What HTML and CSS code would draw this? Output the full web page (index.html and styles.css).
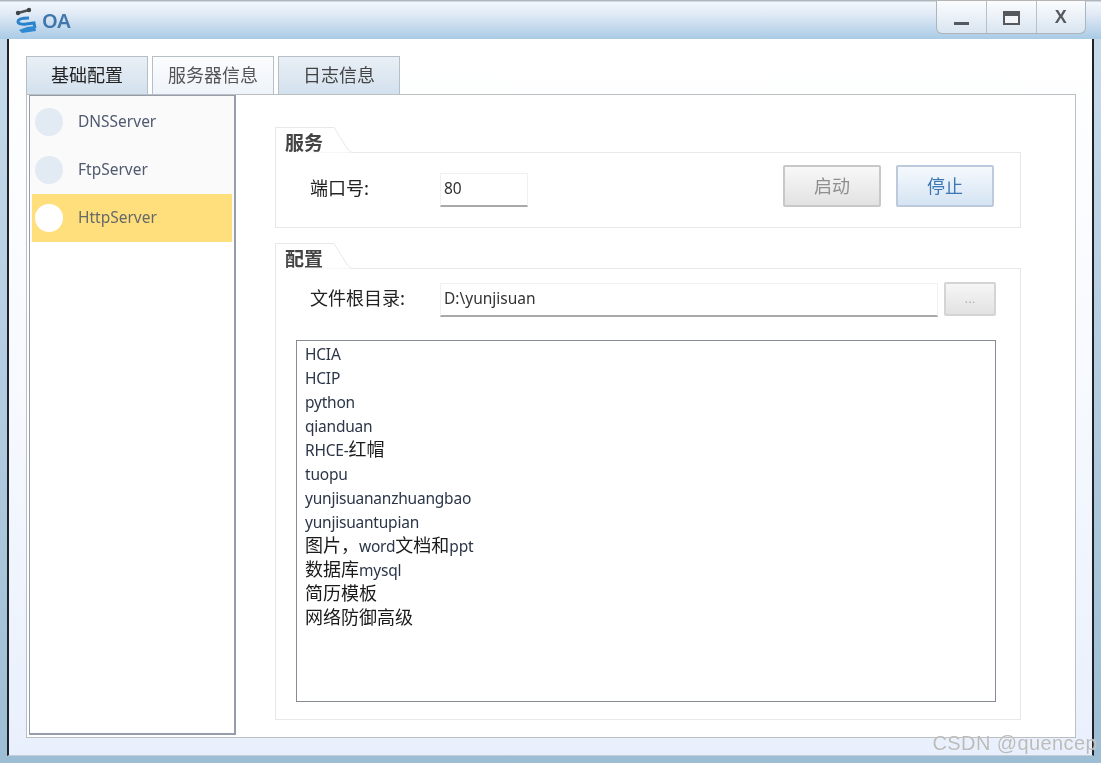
FILE: index.html
```html
<!DOCTYPE html>
<html lang="zh">
<head>
<meta charset="utf-8">
<title>OA</title>
<link rel="stylesheet" href="styles.css">
</head>
<body>
<div class="window">
  <header class="titlebar">
    <svg class="logo" viewBox="0 0 22 28" width="22" height="28" aria-hidden="true">
      <path d="M3 7 L14 4" fill="none" stroke="#4a4f55" stroke-width="2.5" stroke-linecap="round"/>
      <circle cx="3" cy="7" r="2.2" fill="#3f4449"/>
      <circle cx="14" cy="4" r="2.2" fill="#3f4449"/>
      <path d="M14 12 C8 12 3 13 3 15.5 C3 18 7 18.5 11 18 L19 17 L20 22" fill="none" stroke="#2a83cb" stroke-width="3"/>
      <path d="M4 24 L12 21 L20 20 L21 25 L7 27 Z" fill="#2f8ad4"/>
    </svg>
    <span class="app-name">OA</span>
    <div class="controls">
      <button class="ctl"><span class="ctl-min"></span></button>
      <button class="ctl"><span class="ctl-max"></span></button>
      <button class="ctl ctl-x">X</button>
    </div>
  </header>
  <div class="client">
    <nav class="tabs">
      <div class="tab tab-active">基础配置</div>
      <div class="tab tab-light">服务器信息</div>
      <div class="tab">日志信息</div>
    </nav>
    <main class="pane">
      <aside class="server-list">
        <div class="server"><i class="dot"></i><span>DNSServer</span></div>
        <div class="server"><i class="dot"></i><span>FtpServer</span></div>
        <div class="server server-on"><i class="dot"></i><span>HttpServer</span></div>
      </aside>
      <section class="config">
        <div class="group">
          <div class="group-head">
            <svg class="notch" viewBox="0 0 80 26" width="80" height="26" aria-hidden="true"><path d="M0.5 26 V0.5 H59 L72.5 22 Q75 25.5 79 25.5 H80" fill="#fff" stroke="#e8e8e8"/></svg>
            <b class="group-title">服务</b>
          </div>
          <div class="group-body body-port">
            <label class="field-label">端口号:</label>
            <div class="input input-port">80</div>
            <button class="btn btn-off">启动</button>
            <button class="btn btn-on">停止</button>
          </div>
        </div>
        <div class="group group-grow">
          <div class="group-head">
            <svg class="notch" viewBox="0 0 80 26" width="80" height="26" aria-hidden="true"><path d="M0.5 26 V0.5 H59 L72.5 22 Q75 25.5 79 25.5 H80" fill="#fff" stroke="#e8e8e8"/></svg>
            <b class="group-title">配置</b>
          </div>
          <div class="group-body body-files">
            <div class="path-row">
              <label class="field-label">文件根目录:</label>
              <div class="input input-path">D:\yunjisuan</div>
              <button class="btn-browse">...</button>
            </div>
            <ul class="files">
              <li>HCIA</li>
              <li>HCIP</li>
              <li>python</li>
              <li>qianduan</li>
              <li>RHCE-<span class="cjk">红帽</span></li>
              <li>tuopu</li>
              <li>yunjisuananzhuangbao</li>
              <li>yunjisuantupian</li>
              <li><span class="cjk">图片，</span>word<span class="cjk">文档和</span>ppt</li>
              <li><span class="cjk">数据库</span>mysql</li>
              <li><span class="cjk">简历模板</span></li>
              <li><span class="cjk">网络防御高级</span></li>
            </ul>
          </div>
        </div>
      </section>
    </main>
  </div>
  <div class="watermark">CSDN @quencep</div>
</div>
</body>
</html>
```
FILE: styles.css
```css
* { box-sizing: border-box; }
html, body { margin: 0; padding: 0; background: #fff; }
body { width: 1101px; height: 763px; overflow: hidden; font-family: "Noto Sans", "Noto Sans CJK SC", sans-serif; color: #333; }
.window { position: relative; width: 1101px; height: 763px; padding: 1px 1px 2px 1px; background: linear-gradient(#c9dcec, #9dbdd4); border-top: 1px solid #b5b5b5; display: flex; flex-direction: column; filter: blur(0.4px); }
.titlebar { flex: 0 0 37px; margin: 0 -1px 0 -1px; padding-left: 15px; display: flex; align-items: flex-start; background: linear-gradient(#f3f7fc, #dfe9f5 35%, #a9cbe5); }
.logo { margin-top: 4px; }
.app-name { margin: 6px 0 0 5px; font-size: 20px; line-height: 26px; font-weight: 600; color: #3f76ad; }
.controls { margin: -1px 15px 0 auto; display: flex; height: 33px; border: 1px solid #aeb4b9; border-top: 0; border-radius: 0 0 6px 6px; background: linear-gradient(#fbfcfe, #d9e5f0); }
.ctl { width: 49.5px; padding: 0; border: 0; border-left: 1px solid #b9bfc4; background: transparent; display: flex; align-items: center; justify-content: center; }
.ctl:first-child { border-left: 0; }
.ctl-min { width: 15px; height: 3px; margin-top: 13px; background: #55595e; }
.ctl-max { width: 17px; height: 14px; margin-top: 2px; border: 2px solid #55595e; border-top-width: 5px; background: #f3f5f8; }
.ctl-x { font-family: "Liberation Sans", sans-serif; font-size: 18px; font-weight: 700; color: #565a60; }
.client { flex: 1; margin: 0 6px 5px 6px; padding: 17px 16px 17px 17px; background: linear-gradient(#fff, #f6f9fe 50%, #e9f0fd); border-left: 2px solid #1f2226; border-right: 2px solid #1f2226; border-bottom: 1px solid #c4ccd6; display: flex; flex-direction: column; }
.tabs { display: flex; gap: 4px; height: 38px; }
.tab { width: 122px; border: 1px solid #b6bec6; border-bottom: 0; background: linear-gradient(#e9eff5, #d3e1ee); font-family: "Noto Sans CJK SC", sans-serif; font-size: 18px; line-height: 35px; text-align: center; color: #444; }
.tab-active { color: #222; }
.tab-light { background: linear-gradient(#fbfcfe, #eef4fa); color: #555; }
.pane { flex: 1; display: flex; background: #fff; border: 1px solid #bcbfc2; padding: 0 54px 2px 2px; }
.server-list { width: 207px; background: linear-gradient(#fafafa 146px, #fff 146px); border: 1px solid #969daa; border-right-width: 2px; border-bottom-width: 2px; padding: 1.5px 2px 2px; }
.server { height: 48px; display: flex; align-items: center; padding-left: 3px; font-size: 15.5px; color: #4f5a70; }
.server span { margin-left: 15px; padding-bottom: 2px; }
.dot { width: 28px; height: 28px; border-radius: 50%; background: #e2eaf4; }
.server-on { background: #ffdf7c; color: #66696a; }
.server-on .dot { background: #fff; }
.config { flex: 1; padding: 32px 0 15px 39px; display: flex; flex-direction: column; gap: 15px; }
.group { display: flex; flex-direction: column; }
.group-grow { flex: 1; }
.group-head { position: relative; height: 25px; }
.notch { position: absolute; left: 0; top: 0; }
.group-title { position: relative; display: block; padding: 2px 0 0 10px; font-family: "Noto Sans CJK SC", sans-serif; font-size: 19px; line-height: 26px; font-weight: 700; color: #444; }
.group-body { border: 1px solid #e8e8e8; background: #fff; }
.body-port { height: 75.5px; padding-left: 34px; display: flex; align-items: center; }
.field-label { flex: 0 0 130px; padding-bottom: 5px; font-family: "Noto Sans CJK SC", sans-serif; font-size: 18px; color: #222; }
.input { background: #fff; border: 1px solid #f0f0f0; border-bottom: 2px solid #a9a9a9; font-size: 15.5px; padding: 0 0 3px 3px; color: #333; display: flex; align-items: center; }
.input-port { width: 88px; height: 34px; }
.btn { width: 98px; height: 42px; align-self: flex-start; margin-top: 11.5px; padding: 0 0 2px; border-radius: 2px; font-family: "Noto Sans CJK SC", sans-serif; font-size: 18px; }
.btn-off { margin-left: auto; border: 2px solid #c8c8c8; background: linear-gradient(#f8f8f8, #e2e2e2); color: #8f8f8f; }
.btn-on { margin-left: 15px; margin-right: 26px; border: 2px solid #bccadb; background: linear-gradient(#f5f9fd, #d5e4f3); color: #3c76b3; }
.body-files { flex: 1; display: flex; flex-direction: column; padding: 13px 24px 17px 20px; }
.path-row { display: flex; align-items: flex-start; height: 35px; }
.path-row .field-label { margin-left: 14px; flex-basis: 130px; padding-bottom: 0; line-height: 30px; }
.input-path { width: 498px; height: 34px; margin-top: 1px; }
.btn-browse { width: 52px; height: 34px; margin-left: 6px; border: 2px solid #d4d4d4; border-radius: 2px; background: linear-gradient(#f6f6f6, #e2e2e2); color: #aaa; font-size: 13px; }
.files { flex: 1; margin: 23px 0 0; padding: 1.5px 8px; list-style: none; border: 1px solid #868b95; }
.files li { height: 24px; font-size: 15.5px; letter-spacing: -.22px; line-height: 24px; color: #2b3648; white-space: nowrap; }
.cjk { font-family: "Noto Sans CJK SC", sans-serif; font-size: 18px; letter-spacing: 0; line-height: 1; color: #1a1a1a; }
.watermark { position: absolute; right: 4px; top: 728px; font-family: "Liberation Sans", sans-serif; font-size: 20px; line-height: 28px; color: rgba(170,170,170,.8); letter-spacing: .4px; text-shadow: 0 0 1px #fff; }
```
